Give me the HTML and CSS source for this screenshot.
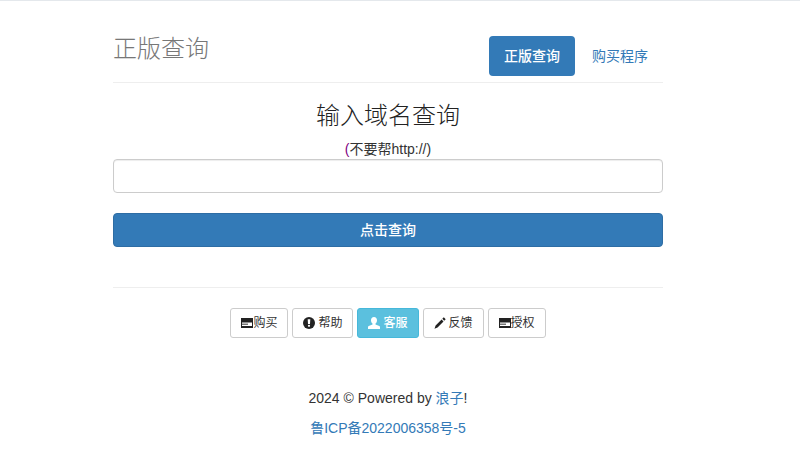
FILE: index.html
```html
<!DOCTYPE html>
<html lang="zh-CN">
<head>
<meta charset="utf-8">
<title>正版查询</title>
<link rel="stylesheet" href="styles.css">
</head>
<body>
<div class="container">
  <header class="header">
    <h3 class="brand">正版查询</h3>
    <nav class="pills">
      <a class="pill active">正版查询</a>
      <a class="pill">购买程序</a>
    </nav>
  </header>
  <main class="query">
    <h3 class="query-title">输入域名查询</h3>
    <label class="hint"><span class="paren">(</span>不要帮http://)</label>
    <input class="field" type="text">
    <button class="submit">点击查询</button>
  </main>
  <hr class="rule">
  <div class="actions">
    <a class="btn"><svg class="ico" viewBox="0 0 12 12"><path d="M0 1h12v10H0z" fill="#222"/><path d="M1 5.500h10v3.500H1z" fill="#fff"/><path d="M1 6.500h6v1.500H1z" fill="#777"/></svg><span>购买</span></a>
    <a class="btn"><svg class="ico" viewBox="0 0 12 12"><circle cx="6" cy="6" r="6" fill="#222"/><path d="M4.700 2.300h2.600L7 7H5z" fill="#fff"/><circle cx="6" cy="8.800" r="1.100" fill="#fff"/></svg><span class="gap">帮助</span></a>
    <a class="btn info"><svg class="ico" viewBox="0 0 12 12"><path d="M6 0c1.900 0 3 1.400 3 3.200 0 1.400-.6 2.600-1.500 3.200v1l3.800 1.500c.5.200.7.600.7 1.100V12H0v-2c0-.5.2-.9.700-1.100l3.800-1.500v-1C3.600 5.800 3 4.600 3 3.200 3 1.400 4.100 0 6 0z" fill="#fff"/></svg><span class="gap">客服</span></a>
    <a class="btn"><svg class="ico" viewBox="0 0 12 12"><path d="M9.800.300l1.900 1.900-1.500 1.500-1.900-1.900zM7.600 2.500l1.900 1.900-6 6-3 1.300 1.100-3.200z" fill="#222"/></svg><span class="gap">反馈</span></a>
    <a class="btn"><svg class="ico" viewBox="0 0 12 12"><path d="M0 1h12v10H0z" fill="#222"/><path d="M1 5.500h10v3.500H1z" fill="#fff"/><path d="M1 6.500h6v1.500H1z" fill="#777"/></svg><span>授权</span></a>
  </div>
  <footer class="footer">
    <p class="line">2024 © Powered by <a class="link">浪子</a>!</p>
    <p class="line"><a class="link">鲁ICP备2022006358号-5</a></p>
  </footer>
</div>
</body>
</html>
```
FILE: styles.css
```css
* { box-sizing: border-box; }
html, body { margin: 0; padding: 0; }
body {
  height: 450px;
  overflow: hidden;
  border-top: 1px solid #e4e8ec;
  background: #fff;
  color: #333;
  font-family: "Liberation Sans", "Noto Sans CJK SC", sans-serif;
  font-size: 14px;
  line-height: 20px;
}
.container { width: 550px; margin-left: 113px; }
.header {
  display: flex;
  justify-content: space-between;
  height: 82px;
  border-bottom: 1px solid #eee;
  padding-top: 35px;
}
.brand {
  margin: 0;
  color: #777;
  font-size: 24px;
  font-weight: 300;
  line-height: 26px;
}
.pills { display: flex; gap: 2px; }
.pill {
  display: block;
  width: 86px;
  height: 40px;
  padding: 10px 15px;
  border-radius: 4px;
  color: #337ab7;
  white-space: nowrap;
}
.pill.active { background: #337ab7; color: #fff; font-weight: 500; }
.query { display: flex; flex-direction: column; align-items: center; }
.query-title {
  margin: 20px 0 10px;
  color: #222;
  font-size: 24px;
  font-weight: 300;
  line-height: 26px;
}
.hint { height: 20px; line-height: 20px; }
.paren { color: #800080; }
.field {
  display: block;
  width: 100%;
  height: 34px;
  margin: 0;
  padding: 6px 12px;
  background: #fff;
  border: 1px solid #ccc;
  border-radius: 4px;
  box-shadow: inset 0 1px 1px rgba(0,0,0,.075);
}
.submit {
  display: block;
  width: 100%;
  height: 34px;
  margin-top: 20px;
  background: #337ab7;
  border: 1px solid #2e6da4;
  border-radius: 4px;
  color: #fff;
  font: inherit;
  font-weight: 500;
}
.rule { margin: 40px 0 20px; border: 0; border-top: 1px solid #eee; }
.actions { display: flex; justify-content: center; gap: 4px; }
.btn {
  display: flex;
  align-items: center;
  height: 30px;
  padding: 0 10px;
  background: #fff;
  border: 1px solid #ccc;
  border-radius: 3px;
  color: #333;
  font-size: 12px;
  line-height: 18px;
}
.btn.info { background: #5bc0de; border-color: #46b8da; color: #fff; font-weight: 500; }
.ico { display: block; width: 12px; height: 12px; flex: none; }
.gap { margin-left: 3px; }
.footer { margin-top: 50px; text-align: center; }
.line { margin: 0 0 10px; }
.link { color: #337ab7; }
```
